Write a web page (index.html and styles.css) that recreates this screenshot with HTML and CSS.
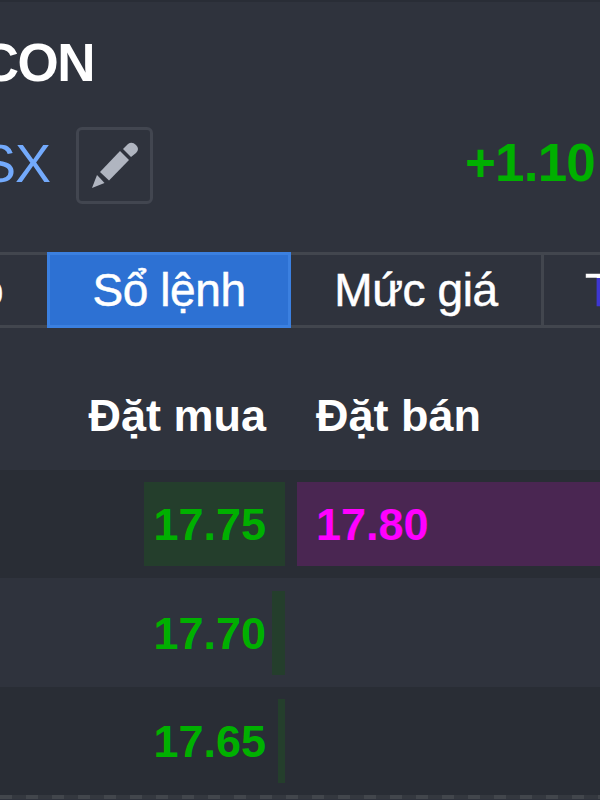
FILE: index.html
```
<!DOCTYPE html>
<html lang="vi">
<head>
  <meta charset="UTF-8" />
  <title>Sổ lệnh</title>
  <link rel="stylesheet" href="styles.css">
</head>
<body>
  <header>
    <div class="symbol">CON</div>
    <div class="info">
      <span class="exchange">SX</span>
      <button class="edit" aria-label="edit">
        <svg width="48" height="48" viewBox="0 0 48 48" fill="#b0b5c0">
          <path d="M1 47 L6 34 Q9 37 13.500 42 Z" />
          <path d="M9 31 L29 10 L38 19 L18 39.500 Z" />
          <path d="M32 8 L37 3 Q41 0 45 4 Q49 8 45 12 L40 16 Z" />
        </svg>
      </button>
      <span class="change">+1.10</span>
    </div>
  </header>
  <nav class="tabs">
    <div class="tab first"><span>o</span></div>
    <div class="tab active"><span>Sổ lệnh</span></div>
    <div class="tab price"><span>Mức giá</span></div>
    <div class="tab last"><span>T</span></div>
  </nav>
  <div class="book">
    <div class="row head">
      <div class="cell buy"><span class="text">Đặt mua</span></div>
      <div class="cell sell"><span class="text">Đặt bán</span></div>
    </div>
    <div class="row dark">
      <div class="cell buy"><div class="bar" style="width: 141px"></div><span class="text">17.75</span></div>
      <div class="cell sell"><div class="bar" style="width: 303px"></div><span class="text">17.80</span></div>
    </div>
    <div class="row">
      <div class="cell buy"><div class="bar" style="width: 13px"></div><span class="text">17.70</span></div>
      <div class="cell sell"></div>
    </div>
    <div class="row dark">
      <div class="cell buy"><div class="bar" style="width: 7px"></div><span class="text">17.65</span></div>
      <div class="cell sell"></div>
    </div>
  </div>
  <div class="line"></div>
</body>
</html>
```
FILE: styles.css
```
* {
  box-sizing: border-box;
}
body {
  margin: 0;
  width: 600px;
  height: 800px;
  overflow: hidden;
  background-color: #2f333d;
  color: #fff;
  font-family: "Liberation Sans", Arial, sans-serif;
  white-space: nowrap;
}
header {
  height: 252px;
  padding-top: 31px;
  border-top: 2px solid #292d36;
}
.symbol {
  display: flex;
  justify-content: flex-end;
  width: 94px;
  height: 60px;
  line-height: 60px;
  font-size: 53px;
  font-weight: bold;
  letter-spacing: -1.5px;
}
.info {
  display: flex;
  align-items: center;
  height: 78px;
  margin-top: 33px;
}
.exchange {
  display: flex;
  justify-content: flex-end;
  width: 50px;
  margin-top: -4px;
  font-size: 54px;
  letter-spacing: -1px;
  color: #73aafc;
}
.edit {
  display: flex;
  align-items: center;
  justify-content: center;
  width: 77px;
  height: 77px;
  margin-left: 26px;
  padding: 0;
  border: 3px solid #424650;
  border-radius: 6px;
  background: none;
}
.change {
  margin-left: auto;
  margin-top: -5px;
  margin-right: 5px;
  font-size: 53px;
  font-weight: bold;
  letter-spacing: -0.8px;
  color: #00b000;
}
.tabs {
  display: flex;
  height: 76px;
  overflow: hidden;
}
.tab {
  display: flex;
  flex: none;
  align-items: center;
  justify-content: center;
  border: 3px solid #42464e;
  border-left: none;
  font-size: 46px;
  letter-spacing: -0.4px;
  -webkit-text-stroke: 0.5px;
}
.first {
  width: 47px;
  border-right: none;
  justify-content: flex-start;
}
.first span {
  margin-left: -22px;
}
.active {
  width: 244px;
  border: 3px solid #3b80e0;
  background-color: #2d71d3;
}
.price {
  width: 253px;
}
.last {
  width: 100px;
  justify-content: flex-start;
  padding-left: 41px;
}
.last span {
  background: linear-gradient(#fff 27%, #3d36d0 27%);
  background-clip: text;
  -webkit-background-clip: text;
  color: transparent;
}
.row {
  display: flex;
  height: 109px;
}
.dark {
  height: 108px;
  background-color: #292d35;
}
.head {
  height: 142px;
  padding-top: 33px;
}
/* the depth bar and the price share one grid area */
.cell {
  display: grid;
  align-items: center;
  width: 291px;
  padding: 12px 6px;
  font-size: 45px;
  font-weight: bold;
}
.cell > * {
  grid-area: 1 / 1;
}
.buy {
  justify-items: end;
}
.sell {
  width: 309px;
  padding-right: 0;
  justify-items: start;
}
.bar {
  height: 84px;
}
.buy .bar {
  background-color: #243e2c;
}
.sell .bar {
  background-color: #4a2652;
}
.text {
  margin: 2px 19px 0;
}
.buy .text {
  color: #00b000;
}
.sell .text {
  color: #ff00ff;
}
.head .text {
  margin-top: 0;
  color: #fff;
}
.line {
  height: 4px;
  background: repeating-linear-gradient(90deg, #42464c 0 12px, #34383f 12px 26px);
}
```
